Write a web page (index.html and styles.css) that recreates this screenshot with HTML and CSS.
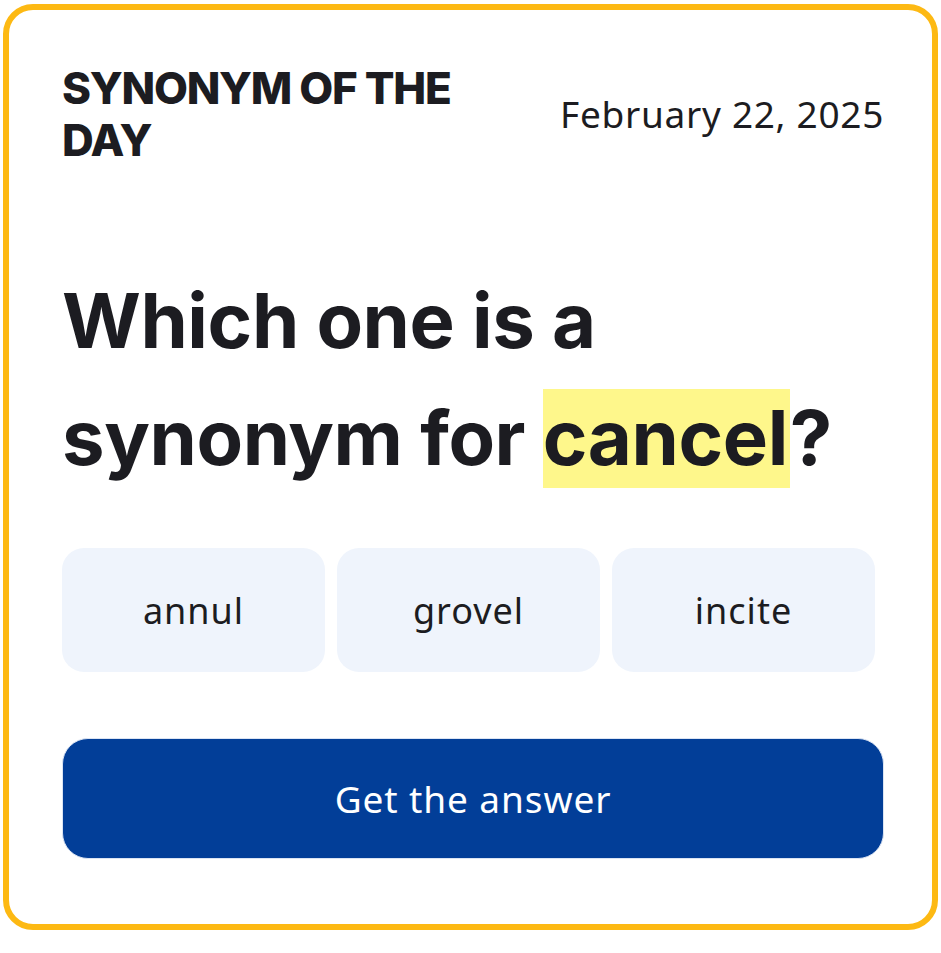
FILE: index.html
```html
<!DOCTYPE html>
<html lang="en">
<head>
<meta charset="utf-8">
<title>Synonym of the Day</title>
<link rel="stylesheet" href="styles.css">
</head>
<body>
<div class="card">
  <div class="header">
    <h2 class="label">SYNONYM OF THE DAY</h2>
    <div class="date">February 22, 2025</div>
  </div>
  <h1 class="question">Which one is a synonym for <span class="hl">cancel</span>?</h1>
  <div class="options">
    <button class="option">annul</button>
    <button class="option">grovel</button>
    <button class="option">incite</button>
  </div>
  <button class="answer">Get the answer</button>
</div>
</body>
</html>
```

FILE: styles.css
```css
html, body {
  margin: 0;
  padding: 0;
  background: #ffffff;
}

.card {
  box-sizing: border-box;
  margin: 4px 3px;
  width: 935px;
  height: 926px;
  border: 6px solid #fdb913;
  border-radius: 30px;
  padding: 52px 48px 0 53px;
  color: #1c1c21;
}

.header {
  display: flex;
  align-items: center;
  justify-content: space-between;
}

.label {
  margin: 0;
  width: 400px;
  font-family: Inter, sans-serif;
  font-weight: 800;
  font-size: 44px;
  line-height: 52px;
  letter-spacing: -1.3px;
}

.date {
  font-family: "Noto Sans", sans-serif;
  font-size: 37px;
  line-height: 44px;
  letter-spacing: 0.7px;
}

.question {
  margin: 96px 0 0 0;
  font-family: Inter, sans-serif;
  font-weight: 700;
  font-size: 76px;
  line-height: 117px;
  letter-spacing: -0.4px;
  width: 780px;
}

.hl {
  background: #fef78b;
  padding: 2px 2px 5px 0;
}

.options {
  display: flex;
  gap: 12px;
  margin: 52px 9px 0 0;
}

.option {
  flex: 1;
  height: 124px;
  border: none;
  border-radius: 22px;
  background: #eff4fc;
  color: #1c1c21;
  font-family: "Noto Sans", sans-serif;
  font-size: 36px;
  letter-spacing: 1px;
  padding: 0;
}

.answer {
  display: block;
  box-sizing: border-box;
  width: 100%;
  height: 121px;
  margin-top: 66px;
  border: 1px solid #dbe4f3;
  border-radius: 26px;
  background: #023e98;
  color: #ffffff;
  font-family: "Noto Sans", sans-serif;
  font-size: 37px;
  letter-spacing: 0.9px;
  padding: 0;
}
```
